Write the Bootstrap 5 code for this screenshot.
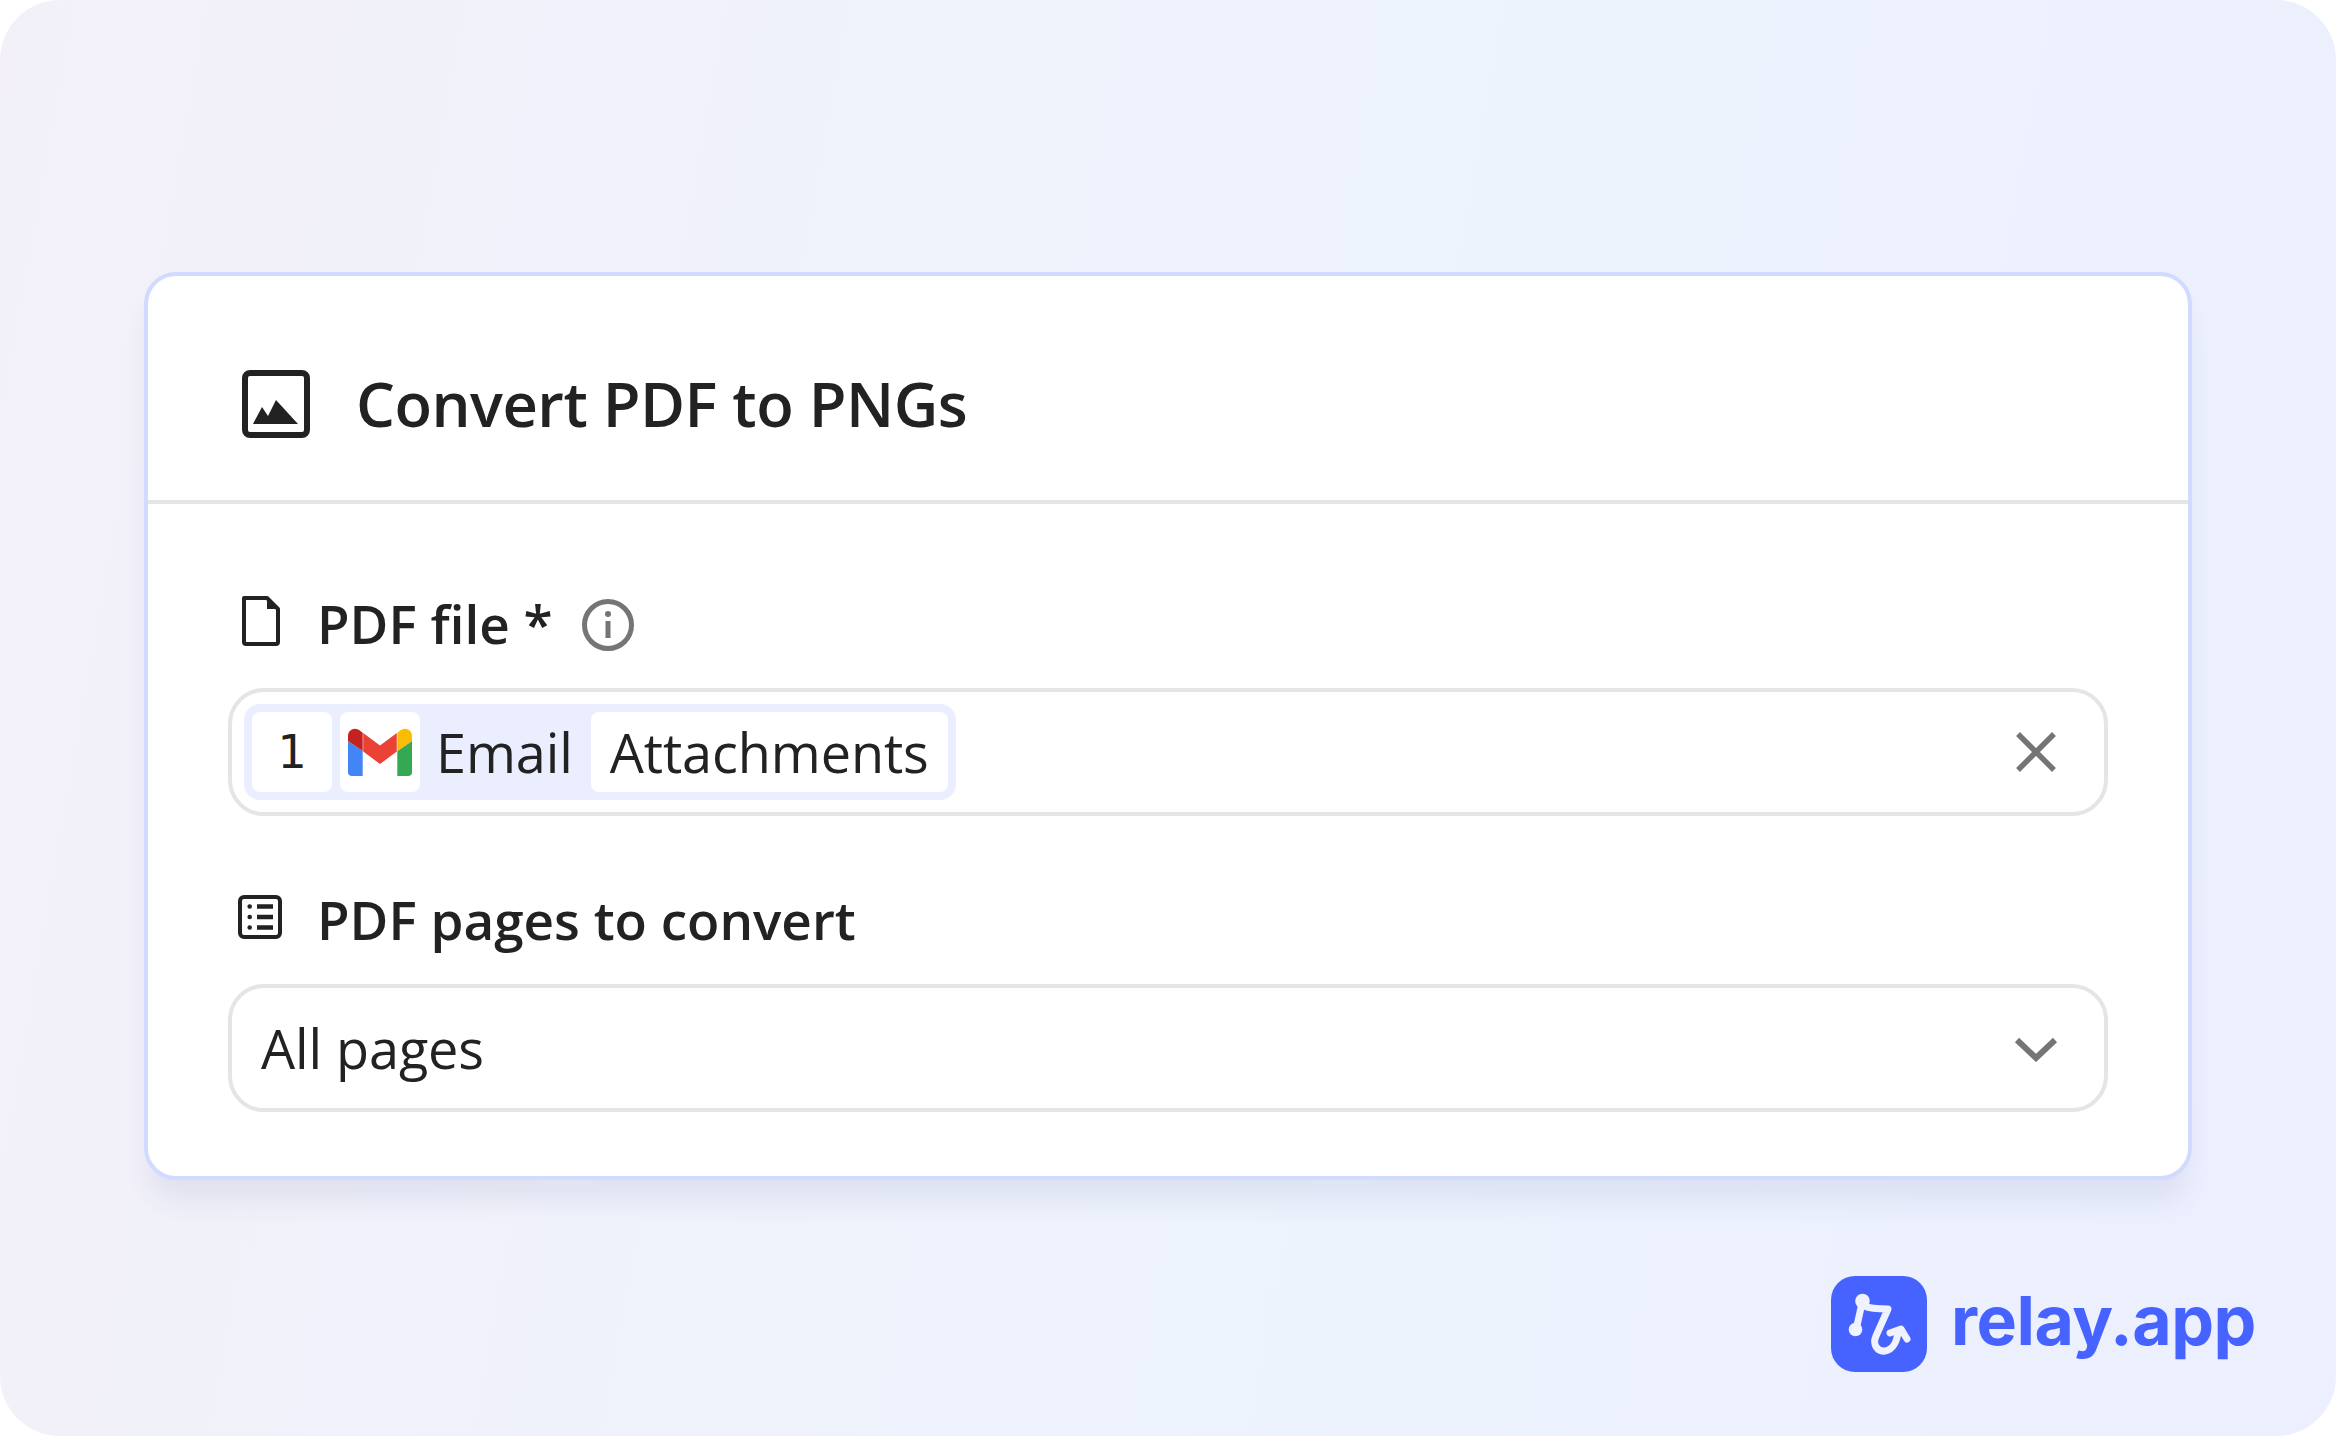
<!DOCTYPE html>
<html lang="en">
<head>
<meta charset="utf-8">
<title>Convert PDF to PNGs</title>
<link rel="stylesheet" href="https://cdn.jsdelivr.net/npm/bootstrap@5.3.0/dist/css/bootstrap.min.css">
<style>
html,body{margin:0;height:1436px;background:#fff;overflow:hidden}
body{font-family:"Open Sans","Liberation Sans",sans-serif;color:#222}
.canvas{width:2336px;height:1436px;border-radius:60px;padding-top:272px;background:linear-gradient(100deg,#f3f0f8 0%,#f0f2fb 30%,#edf3fd 60%,#eceffe 100%)}
.panel{width:2048px;height:908px;margin-left:144px;background:#fff;border:4px solid #d1daff;border-radius:32px;box-shadow:0 26px 28px -6px rgba(60,70,130,.09)}
.panel-head{height:228px;padding:32px 0 0 94px;gap:46px;border-bottom:4px solid #e5e5e5}
.panel-title{font-size:61.500px;font-weight:600;letter-spacing:-.5px;line-height:1;margin:0 0 1px}
.panel-body{padding:80px 80px 0}
.field-label{height:84px;font-size:53px;font-weight:600;line-height:1}
.field-label-text{margin-bottom:6px}
.field-label-next{margin-top:64px}
.label-icon{width:89px;flex:none;margin-bottom:10px;line-height:0}
.label-icon-file{padding-left:13px}
.label-icon-list{padding-left:10px}
.info-mark{margin-left:29px;margin-bottom:2px}
.field-box{height:128px;margin-top:20px;border:4px solid #e5e5e5;border-radius:36px;font-size:54px;letter-spacing:-.1px}
.token-row{height:96px;margin-left:12px;padding:8px;gap:8px;background:#eaeefe;border-radius:16px}
.token-cell{height:80px;background:#fff;border-radius:8px}
.token-square{width:80px}
.token-count{font-family:"DejaVu Sans",sans-serif;font-size:46px}
.token-text{padding:0 19px}
.token-plain{margin:0 10px 0 8px}
.action-mark{margin-right:46px}
.field-value{padding-left:29px}
.relay-logo{margin-top:96px;padding-right:80px;gap:24px}
.relay-name{font-family:Inter,"Liberation Sans",sans-serif;font-weight:700;font-size:68px;line-height:1;margin-bottom:8px;color:#4763ff;letter-spacing:-.5px}
</style>
</head>
<body>
<div class="canvas">
  <div class="panel">
    <div class="panel-head d-flex align-items-center">
      <svg width="68" height="68" viewBox="0 0 68 68"><rect x="3" y="3" width="62" height="62" rx="5" fill="none" stroke="#222" stroke-width="6"/><path d="M11 54 20 37 26 46 34 30 56 54Z" fill="#222"/></svg>
      <h1 class="panel-title">Convert PDF to PNGs</h1>
    </div>
    <div class="panel-body">
      <div class="field-label d-flex align-items-center">
        <div class="label-icon label-icon-file"><svg width="40" height="52" viewBox="0 0 40 52"><path d="M3 3H26L37 14V47a2 2 0 0 1-2 2H5a2 2 0 0 1-2-2Z" fill="none" stroke="#222" stroke-width="4" stroke-linejoin="round"/><path d="M26 2 38 14H26Z" fill="#222"/></svg></div>
        <span class="field-label-text">PDF file *</span>
        <svg class="info-mark" width="52" height="52" viewBox="0 0 52 52"><circle cx="26" cy="26" r="23.500" fill="none" stroke="#757575" stroke-width="5"/><path d="M26 22V39" stroke="#757575" stroke-width="5"/><circle cx="26" cy="15" r="3" fill="#757575"/></svg>
      </div>
      <div class="field-box d-flex align-items-center justify-content-between">
        <div class="token-row d-flex align-items-center">
          <div class="token-cell token-square token-count d-flex align-items-center justify-content-center">1</div>
          <div class="token-cell token-square d-flex align-items-center justify-content-center">
            <svg width="64" height="48" viewBox="0 0 64 48"><path d="M0 13 14.700 23V48H4a4 4 0 0 1-4-4Z" fill="#4285f4"/><path d="M64 13 49.300 23V48H60a4 4 0 0 0 4-4Z" fill="#34a853"/><path d="M0 13V8C0 1 8-2 13 3.500L14.700 4.700V23Z" fill="#c5221f"/><path d="M64 13V8C64 1 56-2 51 3.500L49.300 4.700V23Z" fill="#fbbc04"/><path d="M15.200 5 32 17.500 48.800 5V23.500L32 36 15.200 23.500Z" fill="#ea4335"/></svg>
          </div>
          <span class="token-plain">Email</span>
          <div class="token-cell token-text d-flex align-items-center">Attachments</div>
        </div>
        <svg class="action-mark" width="44" height="44" viewBox="0 0 44 44"><path d="M4 4 40 40M40 4 4 40" stroke="#757575" stroke-width="5.500"/></svg>
      </div>
      <div class="field-label field-label-next d-flex align-items-center">
        <div class="label-icon label-icon-list"><svg width="44" height="44" viewBox="0 0 44 44"><rect x="2" y="2" width="40" height="40" rx="4" fill="none" stroke="#222" stroke-width="4"/><path d="M19 11.500H35M19 22H35M19 32.500H35" stroke="#222" stroke-width="4.600"/><circle cx="11.700" cy="11.500" r="2.300" fill="#222"/><circle cx="11.700" cy="22" r="2.300" fill="#222"/><circle cx="11.700" cy="32.500" r="2.300" fill="#222"/></svg></div>
        <span class="field-label-text">PDF pages to convert</span>
      </div>
      <div class="field-box d-flex align-items-center justify-content-between">
        <span class="field-value">All pages</span>
        <svg class="action-mark" width="44" height="28" viewBox="0 0 44 28"><path d="M3 6 22 24 41 6" fill="none" stroke="#757575" stroke-width="6"/></svg>
      </div>
    </div>
  </div>
  <div class="relay-logo d-flex justify-content-end align-items-center">
    <svg width="96" height="96" viewBox="0 0 96 96"><rect width="96" height="96" rx="24" fill="#4763ff"/><g fill="none" stroke="#f0f3ff" stroke-width="7" stroke-linecap="round" stroke-linejoin="round"><path d="M31 27 25 54M33 30C40 33 50 33 57 33L45 60C41 69 47 76 54 75 62 74 66 65 67 56M59 57 70 53 76 63"/></g><circle cx="31.500" cy="25" r="7.300" fill="#f0f3ff"/><circle cx="24.500" cy="53.500" r="6.800" fill="#f0f3ff"/></svg>
    <span class="relay-name">relay.app</span>
  </div>
</div>
<script src="https://cdn.jsdelivr.net/npm/bootstrap@5.3.0/dist/js/bootstrap.bundle.min.js"></script>
</body>
</html>
